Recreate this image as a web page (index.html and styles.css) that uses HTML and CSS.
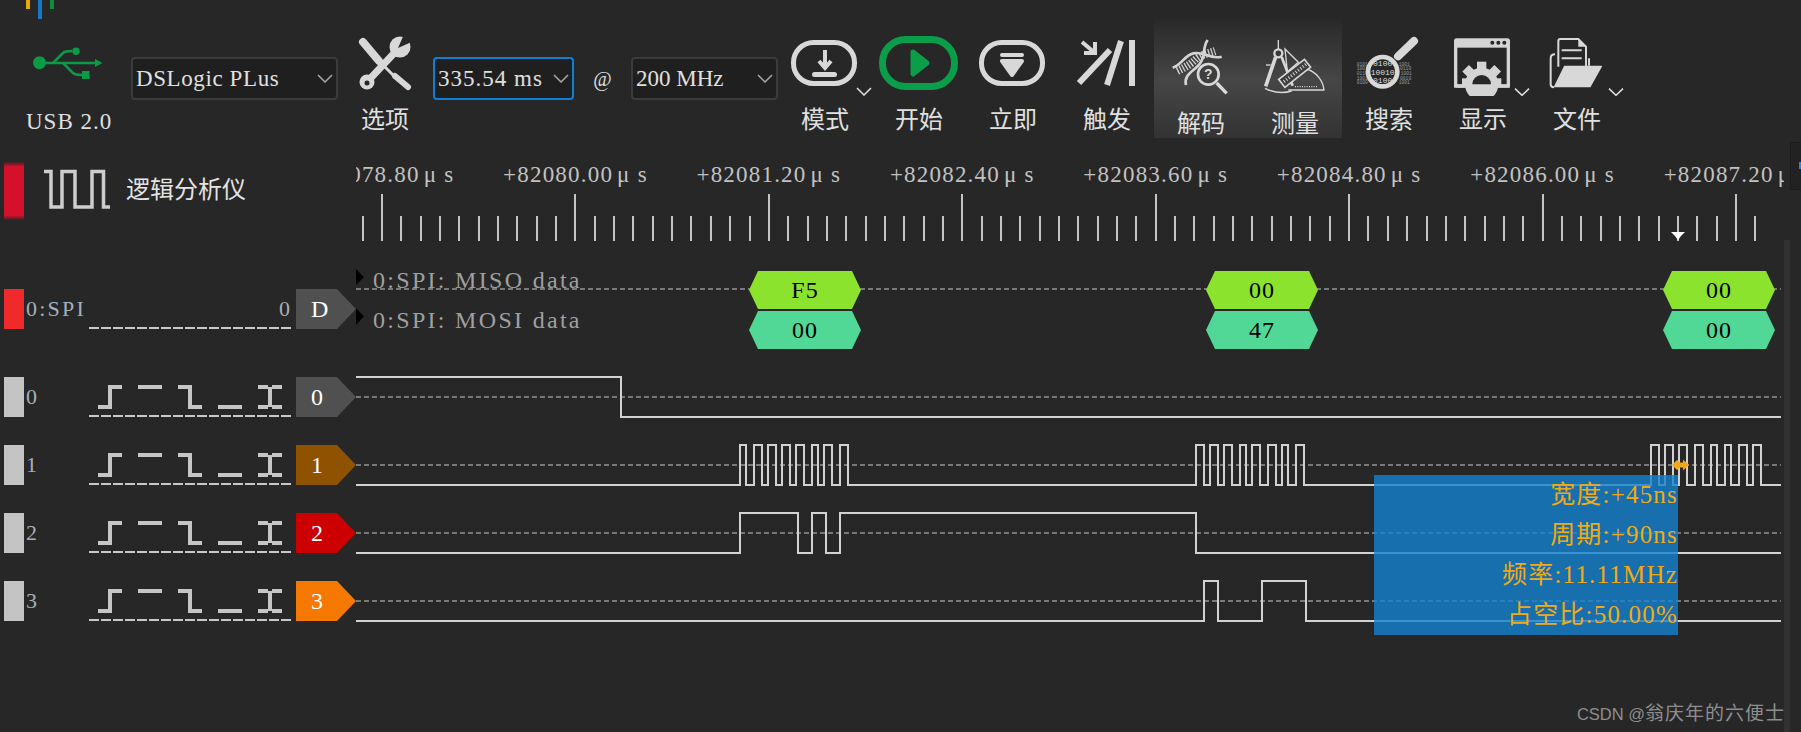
FILE: index.html
```html
<!DOCTYPE html>
<html lang="zh-CN">
<head>
    <meta charset="UTF-8">
    <title>DSView</title>
    <link rel="stylesheet" href="styles.css">
</head>
<body>
    <svg class="defs">
        <symbol id="trig-icons" viewBox="0 0 202 40">
            <g fill="#c6c6c6">
                <!-- rising -->
                <rect x="9" y="28" width="14" height="4"/><rect x="19" y="8" width="4" height="24"/><rect x="19" y="8" width="14" height="4"/>
                <!-- high -->
                <rect x="49" y="8" width="24" height="4"/>
                <!-- falling -->
                <rect x="89" y="8" width="14" height="4"/><rect x="99" y="8" width="4" height="24"/><rect x="99" y="28" width="14" height="4"/>
                <!-- low -->
                <rect x="129" y="28" width="24" height="4"/>
                <!-- both -->
                <rect x="169" y="8" width="10" height="4"/><rect x="183" y="8" width="10" height="4"/><rect x="179" y="10" width="4" height="20"/><rect x="169" y="28" width="10" height="4"/><rect x="183" y="28" width="10" height="4"/>
            </g>
        </symbol>
    </svg>

    <div class="toolbar">
        <div class="usb">
            <div class="marks"><span class="mark-y"></span><span class="mark-b"></span><span class="mark-g"></span></div>
            <svg class="usb-icon" width="76" height="36" viewBox="30 46 76 36">
                <g fill="none" stroke="#0b9b48" stroke-width="2.5">
                    <path d="M40 63H96"/>
                    <path d="M53 63L63 53Q65 51 72 51"/>
                    <path d="M63 63L73 73Q75 75 83 75"/>
                </g>
                <g fill="#0b9b48">
                    <circle cx="39.5" cy="62.7" r="6.5"/>
                    <circle cx="76" cy="51.3" r="3.7"/>
                    <rect x="82" y="71" width="7.5" height="8"/>
                    <path d="M95 59L102.500 63L95 67Z"/>
                </g>
            </svg>
            <div class="usb-label">USB 2.0</div>
        </div>

        <div class="combo combo-device">DSLogic PLus<svg class="combo-arrow" viewBox="0 0 16 9"><path d="M1 1L8 8L15 1"/></svg></div>

        <div class="tool">
            <svg class="tool-icon" viewBox="0 0 94 66">
                <g fill="none" stroke="#d8d8d8" stroke-linecap="round">
                    <path d="M25 12L41 31" stroke-width="8"/>
                    <path d="M41 31L60 50" stroke-width="3"/>
                    <path d="M57 46L70 57" stroke-width="6"/>
                </g>
                <path d="M29 52L61 18" stroke="#d8d8d8" stroke-width="7"/>
                <circle cx="29" cy="52" r="7.500" fill="#d8d8d8"/>
                <circle cx="29" cy="53" r="2.500" fill="#272727"/>
                <circle cx="62" cy="17" r="10.500" fill="#d8d8d8"/>
                <path d="M60 18L67 2L78 10Z" fill="#272727"/>
            </svg>
            <div class="tool-label">选项</div>
        </div>

        <div class="combo combo-time">335.54 ms<svg class="combo-arrow" viewBox="0 0 16 9"><path d="M1 1L8 8L15 1"/></svg></div>
        <div class="at">@</div>
        <div class="combo combo-rate">200 MHz<svg class="combo-arrow" viewBox="0 0 16 9"><path d="M1 1L8 8L15 1"/></svg></div>

        <div class="tool">
            <svg class="tool-icon" viewBox="0 0 94 66">
                <rect x="15.500" y="12.500" width="61" height="41" rx="20" fill="none" stroke="#d8d8d8" stroke-width="5"/>
                <path d="M47 20V38M41 31L47 38L53 31" fill="none" stroke="#d8d8d8" stroke-width="4"/>
                <rect x="34" y="42" width="25" height="5" rx="2.500" fill="#d8d8d8"/>
                <path class="chev" d="M79 58L86 65L93 58"/>
            </svg>
            <div class="tool-label">模式</div>
        </div>
        <div class="tool">
            <svg class="tool-icon" viewBox="0 0 94 66">
                <rect x="10.500" y="9.500" width="72" height="47" rx="23" fill="none" stroke="#0a9d4a" stroke-width="7"/>
                <path d="M41 22L55 33L41 44Z" fill="#0a9d4a" stroke="#0a9d4a" stroke-width="5" stroke-linejoin="round"/>
            </svg>
            <div class="tool-label">开始</div>
        </div>
        <div class="tool">
            <svg class="tool-icon" viewBox="0 0 94 66">
                <rect x="15.500" y="12.500" width="61" height="41" rx="20" fill="none" stroke="#d8d8d8" stroke-width="5"/>
                <rect x="34" y="23" width="24" height="4" rx="2" fill="#d8d8d8"/>
                <path d="M36 31H56L46 45Z" fill="#d8d8d8" stroke="#d8d8d8" stroke-width="4" stroke-linejoin="round"/>
            </svg>
            <div class="tool-label">立即</div>
        </div>
        <div class="tool">
            <svg class="tool-icon" viewBox="0 0 94 66">
                <g fill="none" stroke="#d8d8d8">
                    <path d="M22 12L35 23M24 23H35V12" stroke-width="4"/>
                    <path d="M50 20L19 53" stroke-width="6"/>
                    <path d="M61 11L47 55" stroke-width="6"/>
                </g>
                <rect x="69" y="10" width="6" height="46" fill="#d8d8d8"/>
            </svg>
            <div class="tool-label">触发</div>
        </div>

        <div class="tool-group">
            <div class="tool">
                <svg class="tool-icon" viewBox="-18 15 282 198">
                    <g fill="none" stroke="#d4d4d4">
                        <path d="M38 128C65 120 72 92 100 85C130 78 150 105 185 95" stroke-width="8"/>
                        <path d="M78 180C70 150 100 140 118 118C140 92 125 70 143 45" stroke-width="8"/>
                        <path d="M52 138C80 125 95 115 108 102C125 88 145 85 165 78" stroke-width="24" stroke-dasharray="4 5"/>
                    </g>
                    <circle cx="145" cy="148" r="31" fill="#3e3e3e" stroke="#d8d8d8" stroke-width="8"/>
                    <text class="help-mark" x="145" y="162">?</text>
                    <path d="M170 174L200 205" stroke="#d8d8d8" stroke-width="10"/>
                </svg>
                <div class="tool-label">解码</div>
            </div>
            <div class="tool">
                <svg class="tool-icon" viewBox="264 15 282 198">
                    <g fill="none" stroke="#d8d8d8">
                        <path d="M355 45V72" stroke-width="4"/>
                        <circle cx="355" cy="85" r="12" stroke-width="7"/>
                        <path d="M347 96L317 184" stroke-width="11"/>
                        <path d="M365 96L398 182" stroke-width="8"/>
                        <path d="M318 120H332" stroke-width="4"/>
                        <path d="M375 72L415 112L382 140Z" stroke-width="4"/>
                        <path d="M385 195H492A75 75 0 0 0 440 132" stroke-width="4"/>
                        <path d="M405 185H475" stroke-width="4" stroke-dasharray="3 4"/>
                        <path d="M315 190Q355 210 395 198" stroke-width="4"/>
                        <rect x="355" y="130" width="98" height="30" transform="rotate(-38 404 145)" fill="#3e3e3e" stroke-width="5"/>
                        <path d="M372 170L438 118" stroke-width="10" stroke-dasharray="3 6"/>
                    </g>
                </svg>
                <div class="tool-label">测量</div>
            </div>
        </div>

        <div class="tool">
            <svg class="tool-icon" viewBox="546 15 282 198">
                <g class="bits">
                    <text x="590" y="122">0101</text>
                    <text x="590" y="136">1001</text>
                    <text x="590" y="150">0110</text>
                    <text x="590" y="164">1001</text>
                    <text x="590" y="178">0100</text>
                    <text x="716" y="122">1001</text>
                    <text x="720" y="136">0110</text>
                    <text x="722" y="150">1001</text>
                    <text x="720" y="164">0010</text>
                    <text x="716" y="178">1001</text>
                </g>
                <circle cx="668" cy="140" r="44" fill="#272727" stroke="#d8d8d8" stroke-width="14"/>
                <g class="bits-big">
                    <text x="668" y="124">0100</text>
                    <text x="668" y="149">10010</text>
                    <text x="668" y="174">0100</text>
                </g>
                <path d="M714 94L762 48" stroke="#d8d8d8" stroke-width="24" stroke-linecap="round"/>
            </svg>
            <div class="tool-label">搜索</div>
        </div>
        <div class="tool">
            <svg class="tool-icon" viewBox="-12 15 282 198">
                <rect x="42" y="40" width="168" height="148" rx="8" fill="#d4d4d4"/>
                <rect x="52" y="68" width="148" height="110" fill="#272727"/>
                <g fill="#272727"><circle cx="157" cy="53" r="6"/><circle cx="175" cy="53" r="6"/><circle cx="193" cy="53" r="6"/></g>
                <g fill="#d4d4d4">
                    <circle cx="125" cy="178" r="50"/>
                    <rect x="111" y="110" width="28" height="30"/>
                    <rect x="111" y="110" width="28" height="30" transform="rotate(-45 125 178)"/>
                    <rect x="111" y="110" width="28" height="30" transform="rotate(45 125 178)"/>
                    <rect x="66" y="160" width="118" height="20"/>
                    <rect x="42" y="178" width="168" height="10"/>
                </g>
                <path d="M97 178A28 28 0 0 1 153 178Z" fill="#272727"/>
                <path class="chev chev-scaled" d="M225 191L246 211L267 191"/>
            </svg>
            <div class="tool-label">显示</div>
        </div>
        <div class="tool">
            <svg class="tool-icon" viewBox="270 15 282 198">
                <g fill="none" stroke="#d8d8d8" stroke-width="6">
                    <path d="M355 125V48Q355 42 361 42H415L438 65V125"/>
                    <path d="M365 76H425M365 100H425"/>
                    <path d="M345 88Q332 88 332 100V178Q332 187 342 187"/>
                    <path d="M447 100V122"/>
                </g>
                <path d="M415 42V65H438Z" fill="#d8d8d8"/>
                <path d="M374 124H484L450 185H344Z" fill="#d8d8d8" stroke="#d8d8d8" stroke-width="4" stroke-linejoin="round"/>
                <path class="chev chev-scaled" d="M507 191L528 211L549 191"/>
            </svg>
            <div class="tool-label">文件</div>
        </div>
    </div>

    <div class="main">
        <div class="side">
            <div class="side-title">
                <span class="title-bar"></span>
                <svg class="title-wave" width="68" height="42" viewBox="43 167 68 42">
                    <path d="M44 169.500H51V205H62V169.500H75V205H92V169.500H103.500V205H110" fill="none" stroke="#cdcdcd" stroke-width="3.500"/>
                </svg>
                <span class="title-text">逻辑分析仪</span>
            </div>

            <div class="rows">
                <div class="row row-decoder">
                    <span class="swatch swatch-red"></span>
                    <span class="row-name">0:SPI</span>
                    <div class="trig trig-value">0</div>
                    <span class="tag tag-d">D</span>
                </div>
                <div class="signals">
                    <div class="row">
                        <span class="swatch"></span><span class="row-name">0</span>
                        <div class="trig"><svg width="202" height="40"><use href="#trig-icons"/></svg></div>
                        <span class="tag tag-0">0</span>
                    </div>
                    <div class="row">
                        <span class="swatch"></span><span class="row-name">1</span>
                        <div class="trig"><svg width="202" height="40"><use href="#trig-icons"/></svg></div>
                        <span class="tag tag-1">1</span>
                    </div>
                    <div class="row">
                        <span class="swatch"></span><span class="row-name">2</span>
                        <div class="trig"><svg width="202" height="40"><use href="#trig-icons"/></svg></div>
                        <span class="tag tag-2">2</span>
                    </div>
                    <div class="row">
                        <span class="swatch"></span><span class="row-name">3</span>
                        <div class="trig"><svg width="202" height="40"><use href="#trig-icons"/></svg></div>
                        <span class="tag tag-3">3</span>
                    </div>
                </div>
            </div>
        </div>

        <!-- viewBox keeps screen coordinates, the traces are a free canvas -->
        <svg id="canvas" class="canvas" width="1428" height="592" viewBox="356 140 1428 592"></svg>
        <div class="scroll-strip"></div>
        <div class="scroll-side"><span class="scroll-box"><i></i></span></div>

        <div class="measure">
            <div>宽度:+45ns</div>
            <div>周期:+90ns</div>
            <div>频率:11.11MHz</div>
            <div>占空比:50.00%</div>
        </div>
        <div class="watermark">CSDN @<span>翁庆年的六便士</span></div>
    </div>

    <script src="script.js"></script>
</body>
</html>
```

FILE: styles.css
```css
body {
    margin: 0;
    width: 1801px;
    height: 732px;
    overflow: hidden;
    background-color: #272727;
    color: #e0e0e0;
    font-family: "Liberation Serif", "Noto Sans CJK SC", serif;
}
.defs {
    display: none;
}

/* toolbar */
.toolbar {
    display: flex;
    align-items: flex-start;
    height: 140px;
}
.usb {
    width: 131px;
    flex: none;
}
.marks {
    display: flex;
    align-items: flex-start;
    gap: 8px;
    height: 46px;
    padding-left: 26px;
}
.marks span {
    width: 4px;
    height: 9px;
}
.mark-y {
    background-color: #e8a80c;
}
.marks .mark-b {
    height: 19px;
    background-color: #1578c8;
}
.mark-g {
    background-color: #0d8f3c;
}
.usb-icon {
    display: block;
    margin-left: 30px;
}
.usb-label {
    margin: 26px 0 0 26px;
    font-size: 23px;
    line-height: 28px;
    letter-spacing: 1px;
    white-space: nowrap;
}
.combo {
    display: flex;
    align-items: center;
    justify-content: space-between;
    box-sizing: border-box;
    flex: none;
    height: 43px;
    margin-top: 57px;
    padding: 0 3px 0 3px;
    background-color: #1f1f1f;
    border: 2px solid #3b3b3b;
    border-radius: 4px;
    font-size: 23px;
    letter-spacing: 0.6px;
    white-space: nowrap;
}
.combo-device {
    width: 207px;
}
.combo-time {
    width: 141px;
    margin-left: 1px;
    padding-left: 3px;
    letter-spacing: 1px;
    border-color: #0f7fd4;
}
.combo-rate {
    width: 147px;
    letter-spacing: 0;
}
.combo-arrow {
    width: 16px;
    height: 9px;
    flex: none;
}
.combo-arrow path {
    fill: none;
    stroke: #a8a8a8;
    stroke-width: 1.5;
}
.at {
    width: 57px;
    flex: none;
    margin-top: 68px;
    font-size: 20px;
    text-align: center;
}
.tool {
    width: 94px;
    flex: none;
    padding-top: 30px;
}
.tool-icon {
    display: block;
    width: 94px;
    height: 66px;
}
.tool-label {
    margin-top: 10px;
    font-size: 24px;
    line-height: 28px;
    text-align: center;
}
.chev {
    fill: none;
    stroke: #e0e0e0;
    stroke-width: 1.5;
}
.chev-scaled {
    stroke-width: 4.5;
}
.tool-group {
    display: flex;
    height: 121px;
    margin-top: 17px;
    background: linear-gradient(#282828, #464646 52%, #333333);
}
.tool-group .tool {
    padding-top: 13px;
}
.tool-group .tool-label {
    margin-top: 14px;
}
.help-mark {
    fill: #d8d8d8;
    font-family: "Liberation Sans", sans-serif;
    font-size: 42px;
    font-weight: bold;
    text-anchor: middle;
}
.bits text {
    fill: #9a9a9a;
    font-family: "Liberation Mono", monospace;
    font-size: 14px;
}
.bits-big text {
    fill: #dcdcdc;
    font-family: "Liberation Mono", monospace;
    font-size: 24px;
    text-anchor: middle;
}

/* main area */
.main {
    position: relative;
    display: flex;
    height: 592px;
}
.side {
    width: 356px;
    flex: none;
}
.side-title {
    display: flex;
    align-items: center;
    height: 58px;
    margin: 22px 0 0 4px;
}
.title-bar {
    width: 20px;
    height: 58px;
    background: linear-gradient(#3a2226, #d4102a 8%, #d4102a 92%, #3a2226);
}
.title-wave {
    margin: -3px 0 0 19px;
}
.title-text {
    margin: -3px 0 0 15px;
    font-size: 24px;
    line-height: 28px;
    color: #e4e4e4;
}
.rows {
    margin-top: 69px;
}
.signals {
    display: flex;
    flex-direction: column;
    gap: 28px;
    margin-top: 48px;
}
.row {
    display: flex;
    height: 40px;
    padding-left: 4px;
}
.swatch {
    width: 20px;
    flex: none;
    background-color: #c4c4c4;
}
.swatch-red {
    background-color: #f02a2a;
}
.row-name {
    width: 65px;
    flex: none;
    box-sizing: border-box;
    padding-left: 2px;
    font-size: 22px;
    line-height: 40px;
    color: #a4b0ba;
}
.row-decoder .row-name {
    letter-spacing: 2.2px;
}
.trig {
    width: 202px;
    height: 40px;
    flex: none;
    background: repeating-linear-gradient(90deg, #c8c8c8 0, #c8c8c8 10px, transparent 10px, transparent 12px) left bottom / 100% 2px no-repeat;
}
.trig svg {
    display: block;
}
.trig-value {
    box-sizing: border-box;
    padding-right: 1px;
    font-size: 22px;
    line-height: 40px;
    text-align: right;
    color: #a4b0ba;
}
.tag {
    width: 60px;
    height: 40px;
    flex: none;
    margin-left: 5px;
    padding-left: 15px;
    box-sizing: border-box;
    clip-path: polygon(0 0, 41px 0, 100% 50%, 41px 100%, 0 100%);
    font-size: 24px;
    line-height: 40px;
    color: #ffffff;
}
.tag-d, .tag-0 {
    background-color: #505050;
}
.tag-1 {
    background-color: #8f5200;
}
.tag-2 {
    background-color: #cc0000;
}
.tag-3 {
    background-color: #f57900;
}

.canvas {
    display: block;
    flex: none;
}
.ruler-label {
    fill: #c2c2c2;
    font-size: 23px;
    letter-spacing: 1.2px;
    text-anchor: middle;
}
.lane-label {
    fill: #a0a0a0;
    font-size: 24px;
    letter-spacing: 2.3px;
}
.hex-label {
    fill: #000000;
    font-size: 24px;
    letter-spacing: 1px;
    text-anchor: middle;
}
.scroll-strip {
    width: 6px;
    flex: none;
    margin-top: 100px;
    background-color: #323232;
}
.scroll-side {
    flex: 1;
    padding-top: 2px;
}
.scroll-box {
    display: block;
    height: 48px;
    background-color: #222222;
    border-top: 1px solid #1c1c1c;
    border-bottom: 1px solid #1c1c1c;
    border-left: 1px solid #1c1c1c;
    box-sizing: border-box;
    position: relative;
}
.scroll-box i {
    position: absolute;
    right: 0;
    top: 19px;
    width: 2px;
    height: 7px;
    background-color: #1c8ad8;
}

/* overlay with the pulse measure */
.measure {
    position: absolute;
    left: 1374px;
    top: 335px;
    width: 304px;
    height: 160px;
    background-color: rgba(20, 130, 208, 0.8);
    color: #f0aa14;
    font-size: 25px;
    line-height: 40px;
    letter-spacing: 1.2px;
    text-align: right;
    white-space: nowrap;
}
.watermark {
    position: absolute;
    right: 16px;
    bottom: 6px;
    font-family: "Liberation Sans", "Noto Sans CJK SC", sans-serif;
    font-size: 16.5px;
    line-height: 24px;
    color: #8e8e8e;
    white-space: nowrap;
}
.watermark span {
    font-size: 19px;
    letter-spacing: 1px;
}
```

FILE: script.js
```js
const NS = 'http://www.w3.org/2000/svg';
const canvas = document.getElementById('canvas');

function el(tag, attrs, text) {
    const node = document.createElementNS(NS, tag);
    for (const key in attrs) node.setAttribute(key, attrs[key]);
    if (text) node.textContent = text;
    canvas.appendChild(node);
    return node;
}

const RIGHT = 1781;
const MAJOR = 193.43;
const FIRST_MAJOR = 382;

// ruler ticks, ten divisions for each label
let ticks = '';
for (let i = -1; i <= 71; i++) {
    const x = Math.round(FIRST_MAJOR + i * MAJOR / 10);
    if (x > RIGHT - 5) break;
    ticks += `M${x} ${i % 10 === 0 ? 194 : 216}V241`;
}
el('path', { d: ticks, stroke: '#c4c4c4', 'stroke-width': 2, fill: 'none' });

const labels = ['78.80', '80.00', '81.20', '82.40', '83.60', '84.80', '86.00', '87.20'];
labels.forEach((value, i) => {
    const label = el('text', { class: 'ruler-label', x: FIRST_MAJOR + i * MAJOR, y: 182 });
    label.innerHTML = `+820${value}<tspan dx="4">μ</tspan><tspan dx="7">s</tspan>`;
});

el('path', { d: 'M332 208L344 214L356 208L344 225Z', fill: '#d80f2a' });
el('path', { d: 'M1671 232H1685L1681 236L1678 240L1675 236Z', fill: '#ffffff' });

function dashed(y) {
    el('path', { d: `M356 ${y}H${RIGHT}`, stroke: '#787878', 'stroke-width': 2, 'stroke-dasharray': '5 3' });
}

// decoder lanes
dashed(289);
el('path', { d: 'M356 269L364 277L356 285Z', fill: '#000000' });
el('path', { d: 'M356 308L364 316.500L356 325Z', fill: '#000000' });
el('text', { class: 'lane-label', x: 373, y: 288 }, '0:SPI: MISO data');
el('text', { class: 'lane-label', x: 373, y: 328 }, '0:SPI: MOSI data');

function hex(center, top, color, value) {
    const l = center - 56, r = center + 56, b = top + 38, m = top + 19;
    el('polygon', {
        points: `${l},${m} ${l + 9},${top} ${r - 9},${top} ${r},${m} ${r - 9},${b} ${l + 9},${b}`,
        fill: color
    });
    el('text', { class: 'hex-label', x: center, y: top + 27 }, value);
}
[[805, 'F5', '00'], [1262, '00', '47'], [1719, '00', '00']].forEach(([x, miso, mosi]) => {
    hex(x, 271, '#8be32e', miso);
    hex(x, 311, '#52d896', mosi);
});

// logic traces: y of the high level, level at the left edge, edges
const traces = [
    { high: 377, start: 1, edges: [621] },
    { high: 445, start: 0, edges: [740, 746, 754, 762, 768, 776, 782, 790, 796, 804, 812, 818, 824, 832, 840, 848,
        1196, 1204, 1210, 1218, 1224, 1232, 1240, 1246, 1252, 1260, 1268, 1276, 1282, 1288, 1296, 1304,
        1651, 1659, 1665, 1673, 1679, 1687, 1695, 1703, 1711, 1717, 1725, 1731, 1739, 1747, 1753, 1761] },
    { high: 513, start: 0, edges: [740, 798, 812, 826, 840, 1196] },
    { high: 581, start: 0, edges: [1204, 1218, 1262, 1306] }
];
traces.forEach(trace => {
    dashed(trace.high + 20);
    let level = trace.start;
    let d = `M356 ${trace.high + (level ? 0 : 40)}`;
    trace.edges.forEach(x => {
        level = 1 - level;
        d += `H${x}V${trace.high + (level ? 0 : 40)}`;
    });
    el('path', { d: `${d}H${RIGHT}`, fill: 'none', stroke: '#d2d2d2', 'stroke-width': 2 });
});

// cursor marker on channel 1
el('path', { d: 'M1672 465L1677 460L1680 462.500H1683V459.500L1689 465L1683 470.500V467.500H1680L1677 470Z', fill: '#f0a818' });
```
